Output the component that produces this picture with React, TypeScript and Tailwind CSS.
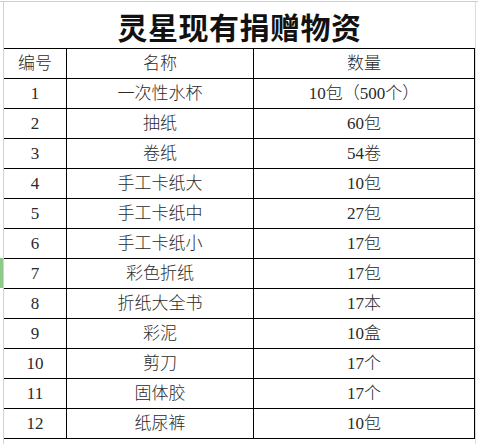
const rows: [string, string, string][] = [
  ["1", "一次性水杯", "10包（500个）"],
  ["2", "抽纸", "60包"],
  ["3", "卷纸", "54卷"],
  ["4", "手工卡纸大", "10包"],
  ["5", "手工卡纸中", "27包"],
  ["6", "手工卡纸小", "17包"],
  ["7", "彩色折纸", "17包"],
  ["8", "折纸大全书", "17本"],
  ["9", "彩泥", "10盒"],
  ["10", "剪刀", "17个"],
  ["11", "固体胶", "17个"],
  ["12", "纸尿裤", "10包"],
];

const cell = "flex items-center justify-center border-r border-black";

function Row({ cols }: { cols: [string, string, string] }) {
  return (
    <div className="grid grid-cols-[63px_187px_221px] h-[30px] border-b border-black">
      <div className={cell}>{cols[0]}</div>
      <div className={cell}>{cols[1]}</div>
      <div className={cell}>{cols[2]}</div>
    </div>
  );
}

export default function App() {
  return (
    <div className="w-[478px] h-[444px] bg-white overflow-hidden pt-[1px]">
      <div className="flex h-full border-t border-[#cfcfcf]">
        {/* row header strip */}
        <div className="w-[4px] flex flex-col border-r border-[#d2d2d2] shrink-0">
          <div className="h-[256px]" />
          <div className="h-[30px] bg-[#8fc98a]" />
        </div>
        <div className="w-[471px] flex flex-col">
          <div className="h-[46px] flex items-center justify-center">
            <h1
              className="text-[30px] font-bold text-[#111] tracking-[0.5px] pt-[2px]"
              style={{ fontFamily: '"Noto Sans CJK SC", sans-serif' }}
            >
              灵星现有捐赠物资
            </h1>
          </div>
          <div
            className="border-t border-black text-[17px] text-[#2a2a2a] font-light leading-none"
            style={{ fontFamily: '"Liberation Serif", "Noto Sans CJK SC", serif' }}
          >
            <Row cols={["编号", "名称", "数量"]} />
            {rows.map((r) => (
              <Row key={r[0]} cols={r} />
            ))}
          </div>
        </div>
        <div className="w-[1px] bg-[#dcdcdc] shrink-0" />
      </div>
    </div>
  );
}
